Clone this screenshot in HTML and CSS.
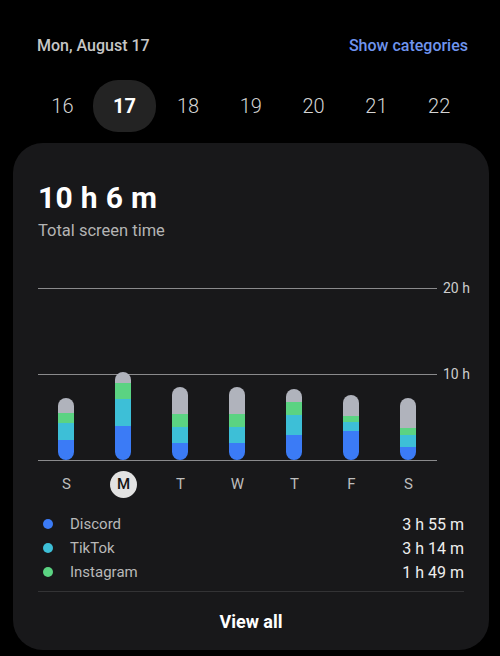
FILE: index.html
```html
<!DOCTYPE html>
<html>
<head>
  <meta charset="utf-8">
  <meta name="viewport" content="width=device-width">
  <title>Screen time</title>
  <link rel="stylesheet" href="styles.css">
</head>
<body>
	<div class="top">
		<span class="date">Mon, August 17</span>
		<span class="link">Show categories</span>
	</div>
	<div class="days">
		<span>16</span>
		<span class="on">17</span>
		<span>18</span>
		<span>19</span>
		<span>20</span>
		<span>21</span>
		<span>22</span>
	</div>
	<div class="card">
		<div class="total">10 h 6 m</div>
		<div class="sub">Total screen time</div>

		<svg class="chart" width="440" height="182" viewBox="0 0 440 182">
			<defs>
				<clipPath id="b0"><rect x="20" y="118" width="16" height="62" rx="8"/></clipPath>
				<clipPath id="b1"><rect x="77" y="92" width="16" height="88" rx="8"/></clipPath>
				<clipPath id="b2"><rect x="134" y="107" width="16" height="73" rx="8"/></clipPath>
				<clipPath id="b3"><rect x="191" y="107" width="16" height="73" rx="8"/></clipPath>
				<clipPath id="b4"><rect x="248" y="109" width="16" height="71" rx="8"/></clipPath>
				<clipPath id="b5"><rect x="305" y="115" width="16" height="65" rx="8"/></clipPath>
				<clipPath id="b6"><rect x="362" y="118" width="16" height="62" rx="8"/></clipPath>
			</defs>
			<g class="grid">
				<line x1="0" y1="8.5" x2="399" y2="8.5"/>
				<line x1="0" y1="94.5" x2="399" y2="94.5"/>
				<line x1="0" y1="180.5" x2="399" y2="180.5"/>
			</g>
			<text class="axis" x="405" y="13">20 h</text>
			<text class="axis" x="405" y="99">10 h</text>

			<g clip-path="url(#b0)">
				<rect class="c4" x="20" y="118" width="16" height="15"/>
				<rect class="c3" x="20" y="133" width="16" height="10"/>
				<rect class="c2" x="20" y="143" width="16" height="17"/>
				<rect class="c1" x="20" y="160" width="16" height="20"/>
			</g>
			<g clip-path="url(#b1)">
				<rect class="c4" x="77" y="92" width="16" height="11"/>
				<rect class="c3" x="77" y="103" width="16" height="16"/>
				<rect class="c2" x="77" y="119" width="16" height="27"/>
				<rect class="c1" x="77" y="146" width="16" height="34"/>
			</g>
			<g clip-path="url(#b2)">
				<rect class="c4" x="134" y="107" width="16" height="27"/>
				<rect class="c3" x="134" y="134" width="16" height="13"/>
				<rect class="c2" x="134" y="147" width="16" height="16"/>
				<rect class="c1" x="134" y="163" width="16" height="17"/>
			</g>
			<g clip-path="url(#b3)">
				<rect class="c4" x="191" y="107" width="16" height="27"/>
				<rect class="c3" x="191" y="134" width="16" height="13"/>
				<rect class="c2" x="191" y="147" width="16" height="16"/>
				<rect class="c1" x="191" y="163" width="16" height="17"/>
			</g>
			<g clip-path="url(#b4)">
				<rect class="c4" x="248" y="109" width="16" height="13"/>
				<rect class="c3" x="248" y="122" width="16" height="13"/>
				<rect class="c2" x="248" y="135" width="16" height="20"/>
				<rect class="c1" x="248" y="155" width="16" height="25"/>
			</g>
			<g clip-path="url(#b5)">
				<rect class="c4" x="305" y="115" width="16" height="21"/>
				<rect class="c3" x="305" y="136" width="16" height="6"/>
				<rect class="c2" x="305" y="142" width="16" height="9"/>
				<rect class="c1" x="305" y="151" width="16" height="29"/>
			</g>
			<g clip-path="url(#b6)">
				<rect class="c4" x="362" y="118" width="16" height="30"/>
				<rect class="c3" x="362" y="148" width="16" height="7"/>
				<rect class="c2" x="362" y="155" width="16" height="12"/>
				<rect class="c1" x="362" y="167" width="16" height="13"/>
			</g>
		</svg>

		<div class="week">
			<span>S</span>
			<span><b class="today">M</b></span>
			<span>T</span>
			<span>W</span>
			<span>T</span>
			<span>F</span>
			<span>S</span>
		</div>

		<ul class="apps">
			<li><i class="dot blue"></i><span class="name">Discord</span><span class="time">3 h 55 m</span></li>
			<li><i class="dot cyan"></i><span class="name">TikTok</span><span class="time">3 h 14 m</span></li>
			<li><i class="dot green"></i><span class="name">Instagram</span><span class="time">1 h 49 m</span></li>
		</ul>

		<div class="all">View all</div>
	</div>
</body>
</html>
```

FILE: styles.css
```css
	body{
		margin:0;
		background:#000;
		color:#fff;
		font-family:Roboto, "Noto Sans", sans-serif;
	}
	.top{
		display:flex;
		justify-content:space-between;
		align-items:center;
		height:20px;
		padding:35px 32px 0 37px;
		font-size:16px;
		font-weight:500;
	}
	.date{
		color:#c6c6c6;
	}
	.link{
		color:#6f94ee;
	}
	.days{
		display:grid;
		grid-template-columns:repeat(7, 62.8px);
		margin:25px 0 0 31px;
	}
	.days span{
		display:flex;
		align-items:center;
		justify-content:center;
		height:52px;
		font-size:20px;
		font-weight:300;
		color:#d4d4d4;
	}
	.days .on{
		margin:0 0.4px 0 -1.2px;
		background:#232323;
		border-radius:25px;
		color:#fff;
		font-weight:700;
	}
	.card{
		margin:11px 11px 0 13px;
		padding:37px 25px 0 25px;
		background:#18181a;
		border-radius:30px;
	}
	.total{
		font-size:30px;
		line-height:36px;
		font-weight:700;
		letter-spacing:0.3px;
	}
	.sub{
		margin-top:5px;
		font-size:16.5px;
		line-height:20px;
		color:#b4b4b4;
	}
	.chart{
		display:block;
		margin-top:39px;
	}
	.grid line{
		stroke:#8a8a8c;
		stroke-width:1;
	}
	.axis{
		fill:#cdcdcd;
		font-size:14px;
		font-family:Roboto, sans-serif;
	}
	.c1{ fill:#3b7bf6; }
	.c2{ fill:#3dbfd7; }
	.c3{ fill:#5bd382; }
	.c4{ fill:#b0b3bc; }
	.week{
		display:grid;
		grid-template-columns:repeat(7, 57px);
		margin-top:8px;
	}
	.week span{
		display:flex;
		align-items:center;
		justify-content:center;
		height:28px;
		font-size:15px;
		color:#bdbdbd;
	}
	.today{
		display:flex;
		align-items:center;
		justify-content:center;
		width:27px;
		height:27px;
		border-radius:50%;
		background:#e2e2e2;
		color:#151515;
		font-weight:500;
	}
	.apps{
		list-style:none;
		margin:14px 0 0 0;
		padding:0 0 7px 0;
		border-bottom:1px solid #333335;
	}
	.apps li{
		display:flex;
		align-items:center;
		height:24px;
	}
	.dot{
		width:10px;
		height:10px;
		margin-left:5px;
		border-radius:50%;
	}
	.blue{ background:#3b7bf6; }
	.cyan{ background:#3dbfd7; }
	.green{ background:#5bd382; }
	.name{
		flex:1;
		margin-left:17px;
		font-size:15px;
		color:#b9b9b9;
	}
	.time{
		font-size:16px;
		color:#eeeeee;
	}
	.all{
		display:flex;
		align-items:center;
		justify-content:center;
		height:58px;
		font-size:18px;
		font-weight:700;
	}
```
